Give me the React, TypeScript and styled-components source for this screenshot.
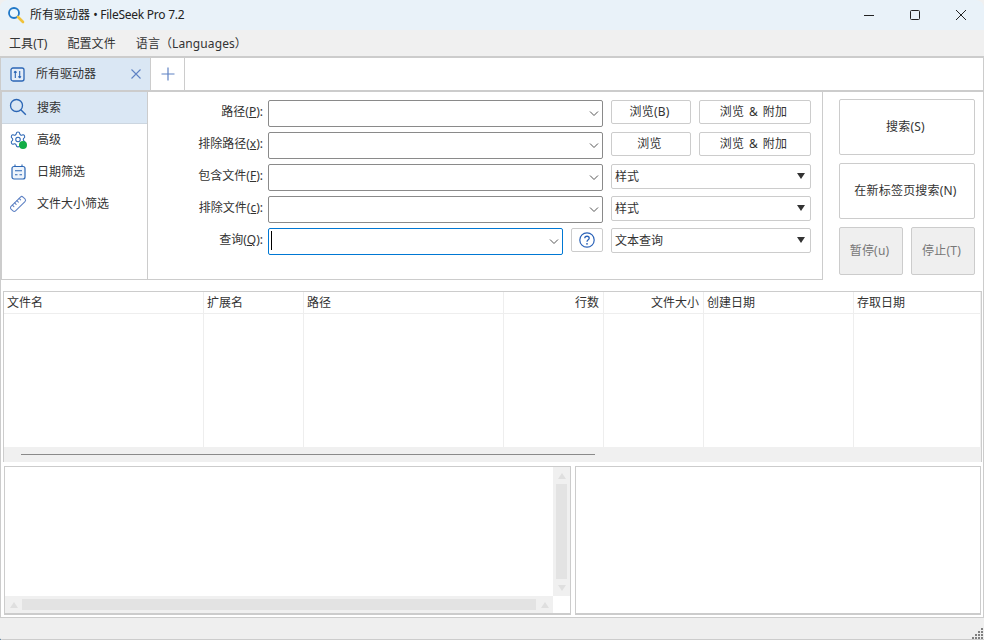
import React from "react";
import styled, { createGlobalStyle } from "styled-components";
import { Settings, Ruler } from "lucide-react";

const Global = createGlobalStyle`
  html, body { margin: 0; padding: 0; background: #3f6f92; }
  * { box-sizing: border-box; }
  body { font-family: "Noto Sans", "Noto Sans CJK SC", sans-serif; font-size: 12px; color: #333; }
`;

const Win = styled.div`
  width: 984px; height: 640px; display: flex; flex-direction: column; background: #f0f0f0;
  overflow: hidden; position: relative; border-bottom-left-radius: 3px;
`;
const TitleBar = styled.div`
  height: 30px; flex: none; display: flex; align-items: center; background: #e9f2f9;
  padding-left: 7px; border-top-right-radius: 8px; border-top-left-radius: 8px;
`;
const TitleText = styled.span`
  margin-left: 5px; font-size: 12px; color: #222; line-height: 30px;
`;
const TitleLatin = styled.span`
  letter-spacing: -0.25px;
`;
const WinButtons = styled.div`
  margin-left: auto; display: flex; height: 100%;
`;
const WinButton = styled.div`
  width: 46px; height: 100%; display: flex; align-items: center; justify-content: center;
`;
const MenuBar = styled.div`
  height: 28px; flex: none; display: flex; align-items: center; padding-left: 9px; gap: 20px; background: #f0f0f0;
  border-bottom: 2px solid #ccc;
`;
const MenuItem = styled.span`
  font-size: 12px; color: #333; letter-spacing: 0.1px;
`;
const Content = styled.div`
  flex: 1; min-height: 0; display: flex; flex-direction: column; background: #fff;
  border-left: 1px solid #ccc; border-right: 1px solid #ccc;
`;
const TabBar = styled.div`
  height: 32px; flex: none; display: flex; background: #fff;
`;
const Tab = styled.div`
  width: 150px; display: flex; align-items: center; background: #dae7f4; border-right: 1px solid #ccc;
  padding-left: 9px;
`;
const TabLabel = styled.span`
  margin: 0 0 2px 11px; flex: 1;
`;
const TabClose = styled.div`
  width: 10px; height: 10px; margin-right: 9px; display: flex;
`;
const AddTab = styled.div`
  width: 34px; display: flex; align-items: center; justify-content: center; border-right: 1px solid #ccc;
`;
const SearchPanel = styled.div`
  height: 190px; flex: none; display: flex; background: #fff;
  border-top: 2px solid #ccc;
`;
const FormBox = styled.div`
  width: 822px; flex: none; display: flex; border-left: 1px solid #ccc; border-right: 1px solid #ccc; border-bottom: 1px solid #ccc;
`;
const Side = styled.div`
  width: 146px; flex: none; border-right: 1px solid #ccc;
`;
const SideItem = styled.div<{ $active?: boolean }>`
  height: 32px; display: flex; align-items: center; padding: 0 0 1px 7px; gap: 10px;
  background: ${(p) => (p.$active ? "#dae7f4" : "transparent")};
  ${(p) => p.$active && "border-bottom: 1px solid #ccd6e0;"}
`;
const SideIcon = styled.div`
  width: 18px; height: 18px; flex: none; display: flex; align-items: center; justify-content: center; position: relative;
`;
const SideText = styled.span<{ $lift?: boolean }>`
  margin-bottom: ${(p) => (p.$lift ? 2 : 0)}px;
`;
const GreenDot = styled.span`
  position: absolute; right: 0; bottom: 0; width: 8px; height: 8px; border-radius: 50%; background: #12ad46;
`;
const FlippedRuler = styled(Ruler)`
  transform: scaleX(-1);
`;
const Form = styled.div`
  flex: 1; display: flex; flex-direction: column; gap: 5px; padding-top: 8px;
`;
const Row = styled.div`
  display: flex; gap: 8px; height: 27px;
`;
const Label = styled.label`
  width: 115px; flex: none; text-align: right; line-height: 24px; margin-right: -3px; color: #333;
  span { text-decoration: underline; }
`;
const Combo = styled.div<{ $focus?: boolean; $w: number }>`
  width: ${(p) => p.$w}px; height: 27px; flex: none; background: #fff; border-radius: 2px; position: relative;
  display: flex; align-items: center; padding-left: 2px;
  border: 1px solid ${(p) => (p.$focus ? "#0078d4" : "#8a8a8a")};
`;
const Caret = styled.span`
  width: 1px; height: 19px; background: #000; margin-bottom: 2px;
`;
const Chevron = styled.svg`
  position: absolute; right: 3px; top: 9px;
`;
const Btn = styled.div<{ $w: number; $h?: number; $off?: boolean }>`
  width: ${(p) => p.$w}px; height: ${(p) => p.$h ?? 24}px; flex: none; display: flex; align-items: center; justify-content: center;
  border: 1px solid #ccc; border-radius: 2px; background: ${(p) => (p.$off ? "#efefef" : "#fff")};
  color: ${(p) => (p.$off ? "#777" : "#333")}; font-size: 12px; letter-spacing: 0.2px; word-spacing: 1.5px; padding: 0 3px 2px 0;
`;
const HelpBtn = styled(Btn)`
  padding: 0;
`;
const Select = styled.div`
  width: 200px; height: 25px; flex: none; display: flex; align-items: center; justify-content: space-between;
  border: 1px solid #ccc; border-radius: 2px; padding: 0 3px 1px; background: #fff;
`;
const SelectArrow = styled.span`
  width: 0; height: 0; border-left: 4px solid transparent; border-right: 4px solid transparent;
  border-top: 6px solid #333; margin: 0 2px 1px 0;
`;
const Actions = styled.div`
  width: 136px; flex: none; margin-left: 16px; padding-top: 7px; display: flex; flex-direction: column; gap: 8px;
`;
const ActionRow = styled.div`
  display: flex; gap: 8px;
`;
const Results = styled.div`
  margin: 11px 1px 0 2px; height: 171px; flex: none; background: #fff; display: flex; flex-direction: column;
  border: 1px solid #ccc; border-bottom: none;
`;
const Header = styled.div`
  height: 22px; flex: none; display: flex; border-bottom: 1px solid #eee;
`;
const Col = styled.div<{ $w: number; $right?: boolean }>`
  width: ${(p) => p.$w}px; flex: none; line-height: 21px; padding: 0 ${(p) => (p.$right ? 4 : 3)}px 0 3px; border-right: 1px solid #eee;
  text-align: ${(p) => (p.$right ? "right" : "left")}; color: #333;
`;
const Body = styled.div`
  flex: 1; display: flex;
`;
const BodyCol = styled.div<{ $w: number }>`
  width: ${(p) => p.$w}px; flex: none; border-right: 1px solid #eee;
`;
const HScroll = styled.div`
  height: 15px; flex: none; background: #f0f0f0; padding: 7px 0 0 17px;
`;
const HThumb = styled.div`
  width: 574px; height: 1px; background: #8a8a8a;
`;
const Panes = styled.div`
  margin: 4px 1px 0 3px; height: 149px; flex: none; display: flex; gap: 4px;
`;
const Pane = styled.div<{ $w: number }>`
  width: ${(p) => p.$w}px; flex: none; background: #fff; border: 1px solid #ccc; border-bottom-width: 2px; display: flex; flex-direction: column;
`;
const PaneTop = styled.div`
  flex: 1; display: flex; justify-content: flex-end; min-height: 0;
`;
const VBar = styled.div`
  width: 17px; background: #f0f0f0; display: flex; flex-direction: column; align-items: center; padding: 0 3px;
`;
const PaneBottom = styled.div`
  height: 17px; flex: none; display: flex;
`;
const HBar = styled.div`
  flex: 1; background: #f0f0f0; display: flex; align-items: center; padding: 3px 0;
`;
const Corner = styled.div`
  width: 17px; background: #fff;
`;
const Thumb = styled.div`
  flex: 1; align-self: stretch; background: #e3e3e3;
`;
const Arrow = styled.span<{ $dir: "up" | "down" }>`
  width: 0; height: 0; flex: none; border-left: 4px solid transparent; border-right: 4px solid transparent;
  ${(p) => (p.$dir === "up" ? "border-bottom: 6px solid #dfdfdf;" : "border-top: 6px solid #dfdfdf;")}
`;
const VArrowBox = styled.div`
  height: 17px; flex: none; display: flex; align-items: center; justify-content: center;
`;
const HArrowBox = styled.div`
  width: 17px; align-self: stretch; flex: none; display: flex; align-items: center; justify-content: center;
`;
const Status = styled.div`
  height: 23px; flex: none; background: #efefef; border-top: 1px solid #ccc; border-bottom: 1px solid #ccc; position: relative;
`;
const Grip = styled.svg`
  position: absolute; right: 0; bottom: -1px;
`;

const widths = [200, 100, 200, 100, 100, 150, 127];
const heads = ["文件名", "扩展名", "路径", "行数", "文件大小", "创建日期", "存取日期"];
const blue = "#2b66b5";
const soft = "#5f82c4";

const Chev = () => (
  <Chevron width="10" height="8" viewBox="0 0 10 8"><path d="M1 1.5 L5 5.5 L9 1.5" fill="none" stroke="#555" strokeWidth="1" /></Chevron>
);

export default function App() {
  return (
    <Win>
      <Global />
      <TitleBar>
        <svg width="18" height="18" viewBox="0 0 18 18">
          <circle cx="7" cy="7" r="5" fill="#eaf6fd" stroke="#1f78c8" strokeWidth="1.8" />
          <path d="M11 11 L16 16" stroke="#f0c23a" strokeWidth="2.6" strokeLinecap="round" />
        </svg>
        <TitleText>所有驱动器 <TitleLatin>• FileSeek Pro 7.2</TitleLatin></TitleText>
        <WinButtons>
          <WinButton>
            <svg width="10" height="10" viewBox="0 0 10 10"><path d="M0 5.5 H10" stroke="#222" strokeWidth="1" /></svg>
          </WinButton>
          <WinButton>
            <svg width="10" height="10" viewBox="0 0 10 10"><rect x="0.5" y="0.5" width="9" height="9" rx="1" fill="none" stroke="#222" strokeWidth="1" /></svg>
          </WinButton>
          <WinButton>
            <svg width="10" height="10" viewBox="0 0 10 10"><path d="M0 0 L10 10 M10 0 L0 10" stroke="#222" strokeWidth="1" /></svg>
          </WinButton>
        </WinButtons>
      </TitleBar>
      <MenuBar>
        <MenuItem>工具(T)</MenuItem>
        <MenuItem>配置文件</MenuItem>
        <MenuItem>语言（Languages）</MenuItem>
      </MenuBar>
      <Content>
        <TabBar>
          <Tab>
            <svg width="15" height="15" viewBox="0 0 15 15">
              <rect x="1" y="1" width="13" height="13" rx="2" fill="#e4edf8" stroke={blue} strokeWidth="1.3" />
              <path d="M5.3 11 V4 M5.3 4 L4 5.6 M5.3 4 L6.6 5.6 M9.7 4 V11 M9.7 11 L8.4 9.4 M9.7 11 L11 9.4" fill="none" stroke={blue} strokeWidth="1.1" />
            </svg>
            <TabLabel>所有驱动器</TabLabel>
            <TabClose>
              <svg width="10" height="10" viewBox="0 0 10 10"><path d="M0.5 0.5 L9.5 9.5 M9.5 0.5 L0.5 9.5" stroke={soft} strokeWidth="1.1" /></svg>
            </TabClose>
          </Tab>
          <AddTab>
            <svg width="14" height="14" viewBox="0 0 14 14"><path d="M7 0.5 V13.5 M0.5 7 H13.5" stroke={soft} strokeWidth="1.2" /></svg>
          </AddTab>
        </TabBar>
        <SearchPanel>
          <FormBox>
            <Side>
              <SideItem $active>
                <SideIcon>
                  <svg width="18" height="18" viewBox="0 0 18 18"><circle cx="7.5" cy="7.5" r="6" fill="none" stroke={blue} strokeWidth="1.3" /><path d="M11.8 11.8 L16.8 16.8" stroke={blue} strokeWidth="1.4" /></svg>
                </SideIcon>
                <SideText>搜索</SideText>
              </SideItem>
              <SideItem>
                <SideIcon>
                  <Settings size={19} color={blue} strokeWidth={1.4} />
                  <GreenDot />
                </SideIcon>
                <SideText $lift>高级</SideText>
              </SideItem>
              <SideItem>
                <SideIcon>
                  <svg width="15" height="16" viewBox="0 0 15 16">
                    <rect x="1" y="2.5" width="13" height="12.5" rx="2" fill="#eef4fb" stroke={blue} strokeWidth="1.2" />
                    <path d="M4 0.5 V3 M11 0.5 V3 M4 6.8 H11 M4 10.8 H6.5 M8.5 10.8 H11" stroke={blue} strokeWidth="1.1" fill="none" />
                  </svg>
                </SideIcon>
                <SideText $lift>日期筛选</SideText>
              </SideItem>
              <SideItem>
                <SideIcon>
                  <FlippedRuler size={18} color={soft} strokeWidth={1.4} />
                </SideIcon>
                <SideText $lift>文件大小筛选</SideText>
              </SideItem>
            </Side>
            <Form>
              <Row>
                <Label>路径(<span>P</span>):</Label>
                <Combo $w={335}><Chev /></Combo>
                <Btn $w={80}>浏览(B)</Btn>
                <Btn $w={112}>浏览 &amp; 附加</Btn>
              </Row>
              <Row>
                <Label>排除路径(<span>x</span>):</Label>
                <Combo $w={335}><Chev /></Combo>
                <Btn $w={80}>浏览</Btn>
                <Btn $w={112}>浏览 &amp; 附加</Btn>
              </Row>
              <Row>
                <Label>包含文件(<span>F</span>):</Label>
                <Combo $w={335}><Chev /></Combo>
                <Select>样式<SelectArrow /></Select>
              </Row>
              <Row>
                <Label>排除文件(<span>c</span>):</Label>
                <Combo $w={335}><Chev /></Combo>
                <Select>样式<SelectArrow /></Select>
              </Row>
              <Row>
                <Label>查询(<span>Q</span>):</Label>
                <Combo $w={295} $focus><Caret /><Chev /></Combo>
                <HelpBtn $w={32}>
                  <svg width="16" height="16" viewBox="0 0 16 16">
                    <circle cx="8" cy="8" r="7.2" fill="none" stroke="#2a62b8" strokeWidth="1.2" />
                    <path d="M5.8 6.2 C5.8 3.6 10.2 3.6 10.2 6.2 C10.2 7.8 8 7.8 8 9.8" fill="none" stroke="#2a62b8" strokeWidth="1.3" />
                    <circle cx="8" cy="11.8" r="0.9" fill="#2a62b8" />
                  </svg>
                </HelpBtn>
                <Select>文本查询<SelectArrow /></Select>
              </Row>
            </Form>
          </FormBox>
          <Actions>
            <Btn $w={136} $h={56}>搜索(S)</Btn>
            <Btn $w={136} $h={56}>在新标签页搜索(N)</Btn>
            <ActionRow>
              <Btn $w={64} $h={48} $off>暂停(u)</Btn>
              <Btn $w={64} $h={48} $off>停止(T)</Btn>
            </ActionRow>
          </Actions>
        </SearchPanel>
        <Results>
          <Header>
            {heads.map((h, i) => (
              <Col key={h} $w={widths[i]} $right={i === 3 || i === 4}>{h}</Col>
            ))}
          </Header>
          <Body>
            {widths.map((w, i) => (
              <BodyCol key={i} $w={w} />
            ))}
          </Body>
          <HScroll><HThumb /></HScroll>
        </Results>
        <Panes>
          <Pane $w={567}>
            <PaneTop>
              <VBar>
                <VArrowBox><Arrow $dir="up" /></VArrowBox>
                <Thumb />
                <VArrowBox><Arrow $dir="down" /></VArrowBox>
              </VBar>
            </PaneTop>
            <PaneBottom>
              <HBar>
                <HArrowBox><Arrow $dir="up" /></HArrowBox>
                <Thumb />
                <HArrowBox><Arrow $dir="up" /></HArrowBox>
              </HBar>
              <Corner />
            </PaneBottom>
          </Pane>
          <Pane $w={406} />
        </Panes>
      </Content>
      <Status>
        <Grip width="14" height="14" viewBox="0 -1 14 14" fill="#808080">
          <rect x="11" y="1" width="2" height="2" />
          <rect x="8" y="4" width="2" height="2" /><rect x="11" y="4" width="2" height="2" />
          <rect x="5" y="7" width="2" height="2" /><rect x="8" y="7" width="2" height="2" /><rect x="11" y="7" width="2" height="2" />
          <rect x="2" y="10" width="2" height="2" /><rect x="5" y="10" width="2" height="2" /><rect x="8" y="10" width="2" height="2" /><rect x="11" y="10" width="2" height="2" />
        </Grip>
      </Status>
    </Win>
  );
}
